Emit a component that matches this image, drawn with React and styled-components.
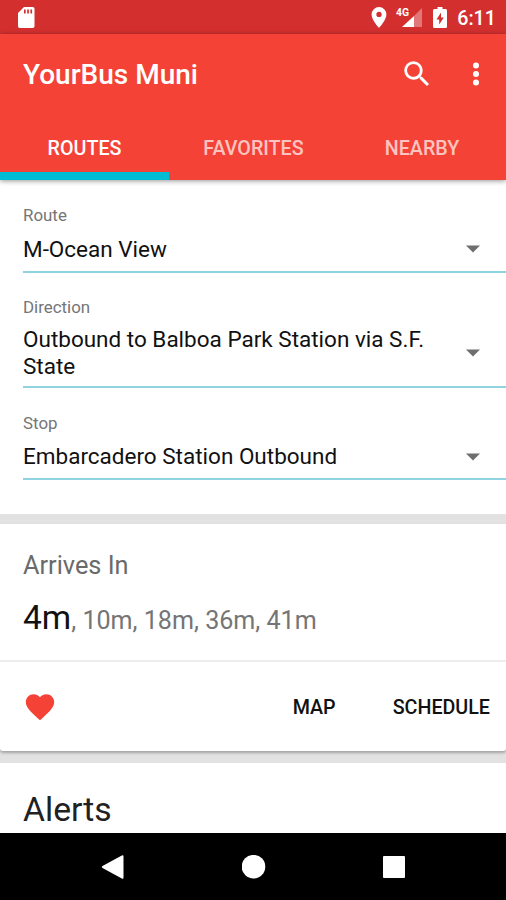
import React, { useState } from 'react';
import styled, { createGlobalStyle } from 'styled-components';

const GlobalStyle = createGlobalStyle`
  * {
    box-sizing: border-box;
  }

  body {
    margin: 0;
    background: #e2e2e2;
    font-family: Roboto, "Noto Sans", sans-serif;
    overflow: hidden;
  }

  button {
    border: 0;
    padding: 0;
    background: none;
    font-family: inherit;
    cursor: pointer;
  }
`;

const Screen = styled.div`
  display: flex;
  flex-direction: column;
  width: 506px;
  height: 900px;
  overflow: hidden;
`;

const StatusBar = styled.div`
  display: flex;
  align-items: center;
  justify-content: space-between;
  flex: none;
  height: 34px;
  padding: 1px 10px 0 18px;
  background: #d32f2f;
  color: #fff;
`;

const StatusIcons = styled.div`
  display: flex;
  align-items: center;
`;

const Clock = styled.span`
  margin-left: 10px;
  padding-top: 2px;
  font-size: 19.7px;
  font-weight: 500;
  line-height: 30px;
`;

const SignalIcon = styled.svg`
  margin-left: 9px;
`;

const BatteryIcon = styled.svg`
  margin-left: 10px;
`;

const AppBar = styled.header`
  flex: none;
  height: 146px;
  background: #f44336;
  color: #fff;
  box-shadow: 0 1px 5px rgba(0, 0, 0, 0.42);
  z-index: 1;
`;

const Toolbar = styled.div`
  display: flex;
  align-items: center;
  height: 79px;
  padding: 0 26px 0 23px;
`;

const Title = styled.h1`
  flex: 1;
  margin: 0;
  padding-top: 2px;
  font-size: 28px;
  font-weight: 500;
  line-height: 34px;
`;

const ToolbarButton = styled.button`
  display: flex;
  margin-left: ${({ $gap }) => $gap || 0}px;
  color: #fff;
`;

const Tabs = styled.nav`
  display: grid;
  grid-template-columns: 169px 169px 168px;
  height: 67px;
`;

const Tab = styled.button`
  height: 67px;
  padding-top: 11px;
  border-bottom: 8px solid ${({ $active }) => ($active ? '#00bcd4' : 'transparent')};
  color: ${({ $active }) => ($active ? '#fff' : 'rgba(255, 255, 255, 0.7)')};
  font-size: 19.7px;
  font-weight: 500;
`;

const RouteForm = styled.section`
  flex: none;
  height: 333.5px;
  padding: 26px 0 0 23px;
  background: #fff;
`;

const Field = styled.div`
  margin-bottom: 25.5px;
`;

const FieldLabel = styled.div`
  height: 20px;
  font-size: 16.9px;
  line-height: 18px;
  color: #757575;
`;

const Select = styled.button`
  display: flex;
  align-items: center;
  justify-content: space-between;
  width: 100%;
  height: ${({ $tall }) => ($tall ? 70 : 46.5)}px;
  padding: 2px 26px 0 0;
  border-bottom: 2px solid #8fd3e0;
  color: #111;
  text-align: left;
`;

const SelectValue = styled.span`
  width: 415px;
  font-size: 22.5px;
  line-height: 26.7px;
`;

const ArrivalCard = styled.section`
  flex: none;
  height: 227px;
  margin-top: 10.5px;
  border-radius: 0 0 3px 3px;
  background: #fff;
  box-shadow: 0 2px 3px rgba(0, 0, 0, 0.28);
`;

const Arrivals = styled.div`
  height: 138px;
  padding: 27px 23px 0;
  border-bottom: 2px solid #ececec;
`;

const CardTitle = styled.h2`
  margin: 0;
  font-size: 25.3px;
  font-weight: 400;
  line-height: 30px;
  color: #6a6a6a;
`;

const Times = styled.div`
  margin-top: 16px;
  font-size: 25.1px;
  line-height: 42px;
  color: #757575;
`;

const NextTime = styled.span`
  font-size: 33.5px;
  color: #111;
`;

const CardActions = styled.div`
  display: flex;
  align-items: center;
  height: 89px;
  padding: 1px 16px 0 23px;
`;

const FavoriteButton = styled.button`
  display: flex;
  margin-right: auto;
`;

const TextButton = styled.button`
  margin-left: 57px;
  padding-top: 1px;
  font-size: 19.7px;
  font-weight: 500;
  color: #111;
`;

const AlertsCard = styled.section`
  flex: 1;
  margin-top: 12px;
  padding: 27px 23px 0;
  background: #fff;
`;

const AlertsTitle = styled.h2`
  margin: 0;
  font-size: 33.7px;
  font-weight: 400;
  line-height: 40px;
  color: #212121;
`;

const NavBar = styled.footer`
  display: flex;
  align-items: center;
  justify-content: space-between;
  flex: none;
  height: 67px;
  padding: 0 101px;
  background: #000;
`;

const TABS = ['ROUTES', 'FAVORITES', 'NEARBY'];

const FIELDS = [
  { label: 'Route', value: 'M-Ocean View' },
  { label: 'Direction', value: 'Outbound to Balboa Park Station via S.F. State', tall: true },
  { label: 'Stop', value: 'Embarcadero Station Outbound' },
];

const LATER_TIMES = ['10m', '18m', '36m', '41m'];

const App = () => {
  const [activeTab, setActiveTab] = useState('ROUTES');
  const [favorite, setFavorite] = useState(true);

  return (
    <Screen>
      <GlobalStyle />

      <StatusBar>
        <svg width="17" height="21" viewBox="0 0 17 21">
          <path
            fill="#fff"
            fillRule="evenodd"
            d="M6 0h8.8Q16.5 0 16.5 1.7v17.6q0 1.7-1.7 1.7H1.7Q0 21 0 19.300V6ZM6 2.500v4h1.700v-4Zm3.200 0v4h1.700v-4Zm3.200 0v4h1.700v-4Z"
          />
        </svg>
        <StatusIcons>
          <svg width="16" height="21" viewBox="0 0 16 21">
            <path
              fill="#fff"
              fillRule="evenodd"
              d="M8 0a7.400 7.400 0 0 0-7.400 7.400C.6 13 8 20.800 8 20.800s7.400-7.800 7.400-13.400A7.400 7.400 0 0 0 8 0Zm0 4.800a2.650 2.650 0 1 1 0 5.300 2.650 2.650 0 0 1 0-5.300Z"
            />
          </svg>
          <SignalIcon width="27" height="21" viewBox="0 0 27 21">
            <path fill="#fff" opacity="0.35" d="M26 1v19H18V9Z" />
            <path fill="#fff" d="M18 9v11H6Z" />
            <text x="0" y="9" fill="#fff" fontSize="11" fontWeight="700" textLength="13" lengthAdjust="spacingAndGlyphs">4G</text>
          </SignalIcon>
          <BatteryIcon width="14" height="21" viewBox="0 0 14 21">
            <path
              fill="#fff"
              fillRule="evenodd"
              d="M4.500 0h5v2h3Q14 2 14 3.500v16q0 1.500-1.500 1.500h-11Q0 21 0 19.500v-16Q0 2 1.500 2h3ZM8 5.500 3.500 12.500h2.700v5l4.600-7H8Z"
            />
          </BatteryIcon>
          <Clock>6:11</Clock>
        </StatusIcons>
      </StatusBar>

      <AppBar>
        <Toolbar>
          <Title>YourBus Muni</Title>
          <ToolbarButton aria-label="Search">
            <svg width="34" height="34" viewBox="0 0 24 24" fill="currentColor">
              <path d="M15.500 14h-.79l-.28-.27A6.471 6.471 0 0 0 16 9.500 6.500 6.500 0 1 0 9.500 16c1.610 0 3.090-.59 4.230-1.570l.27.28v.79l5 4.990L20.490 19l-4.990-5zm-6 0C7.010 14 5 11.990 5 9.500S7.010 5 9.500 5 14 7.010 14 9.500 11.990 14 9.500 14z" />
            </svg>
          </ToolbarButton>
          <ToolbarButton aria-label="More options" $gap={38.5}>
            <svg width="8" height="24" viewBox="0 0 8 24" fill="currentColor">
              <circle cx="4" cy="3.500" r="3" />
              <circle cx="4" cy="12" r="3" />
              <circle cx="4" cy="20.500" r="3" />
            </svg>
          </ToolbarButton>
        </Toolbar>
        <Tabs>
          {TABS.map((tab) => (
            <Tab key={tab} $active={tab === activeTab} onClick={() => setActiveTab(tab)}>
              {tab}
            </Tab>
          ))}
        </Tabs>
      </AppBar>

      <RouteForm>
        {FIELDS.map(({ label, value, tall }) => (
          <Field key={label}>
            <FieldLabel>{label}</FieldLabel>
            <Select $tall={tall}>
              <SelectValue>{value}</SelectValue>
              <svg width="14" height="8" viewBox="0 0 14 8">
                <path fill="#6e6e6e" d="M0 0.500h14L7 7.500Z" />
              </svg>
            </Select>
          </Field>
        ))}
      </RouteForm>

      <ArrivalCard>
        <Arrivals>
          <CardTitle>Arrives In</CardTitle>
          <Times>
            <NextTime>4m</NextTime>, {LATER_TIMES.join(', ')}
          </Times>
        </Arrivals>
        <CardActions>
          <FavoriteButton aria-label="Favorite" onClick={() => setFavorite(!favorite)}>
            <svg width="34" height="34" viewBox="0 0 24 24">
              <path
                fill={favorite ? '#f44336' : '#bdbdbd'}
                d="M12 21.350l-1.450-1.320C5.400 15.360 2 12.280 2 8.500 2 5.420 4.420 3 7.500 3c1.740 0 3.410.81 4.500 2.090C13.090 3.810 14.760 3 16.500 3 19.580 3 22 5.420 22 8.500c0 3.780-3.400 6.860-8.550 11.540L12 21.350z"
              />
            </svg>
          </FavoriteButton>
          <TextButton>MAP</TextButton>
          <TextButton>SCHEDULE</TextButton>
        </CardActions>
      </ArrivalCard>

      <AlertsCard>
        <AlertsTitle>Alerts</AlertsTitle>
      </AlertsCard>

      <NavBar>
        <svg width="24" height="24" viewBox="0 0 24 24">
          <path fill="#fff" d="M1.500 11 20.800.5q1.700-.8 1.700 1v21q0 1.800-1.700 1L1.500 13q-1.400-1 0-2Z" />
        </svg>
        <svg width="24" height="24" viewBox="0 0 24 24">
          <circle cx="11.500" cy="11.700" r="11.800" fill="#fff" />
        </svg>
        <svg width="22" height="22" viewBox="0 0 22 22">
          <rect width="22" height="22" rx="1" fill="#fff" />
        </svg>
      </NavBar>
    </Screen>
  );
};

export default App;
